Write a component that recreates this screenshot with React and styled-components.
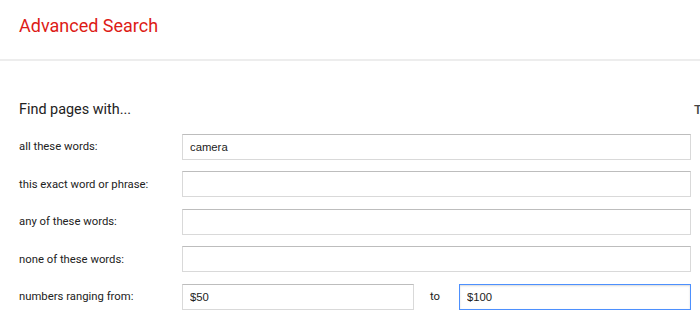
import React from "react";
import styled, { createGlobalStyle } from "styled-components";

const GlobalStyle = createGlobalStyle`
  html, body {
    margin: 0;
    padding: 0;
    background: #fff;
    overflow: hidden;
  }
  body {
    font-family: Roboto, "Liberation Sans", Arial, sans-serif;
    color: #222;
  }
  * { box-sizing: border-box; }
`;

const Page = styled.div`
  width: 700px;
  height: 329px;
  overflow: hidden;
`;

const Header = styled.header`
  height: 61px;
  padding: 15px 0 0 19px;
  border-bottom: 2px solid #ededed;
`;

const Title = styled.h1`
  margin: 0;
  font-size: 18px;
  font-weight: 400;
  line-height: normal;
  color: #dd1b16;
`;

const Main = styled.main`
  padding: 39.5px 0 0 19px;
`;

const Form = styled.div`
  display: grid;
  grid-template-columns: 163px 509px max-content;
  align-items: center;
`;

const SectionRow = styled.div`
  grid-column: 1 / -1;
  display: grid;
  grid-template-columns: 672px max-content;
  column-gap: 3px;
  align-items: baseline;
  margin-bottom: 10.5px;
`;

const SectionTitle = styled.h2`
  margin: 0;
  font-size: 14.4px;
  font-weight: 400;
  line-height: normal;
  color: #222;
`;

const Hint = styled.div`
  font-size: 12.8px;
  font-weight: 500;
  color: #444;
  white-space: nowrap;
`;

const Label = styled.label`
  height: 37.5px;
  display: flex;
  align-items: center;
  font-size: 11.3px;
  color: #222;
  white-space: nowrap;
`;

const Field = styled.div`
  height: 37.5px;
  display: flex;
  align-items: center;
`;

const Spacer = styled.div``;

const Input = styled.input`
  flex: 1;
  min-width: 0;
  height: 26px;
  margin: 0;
  padding: 0 7px;
  border: 1px solid ${(p) => (p.$focused ? "#4d90fe" : "#d9d9d9")};
  border-top-color: ${(p) => (p.$focused ? "#4d90fe" : "#bdbdbd")};
  border-radius: 0;
  background: #fff;
  font-family: "Liberation Sans", Arial, sans-serif;
  font-size: 11.3px;
  color: #222;
  outline: none;
  box-shadow: ${(p) => (p.$focused ? "inset 0 1px 2px rgba(0,0,0,0.15)" : "none")};
`;

const To = styled.span`
  font-size: 11.3px;
  color: #222;
  margin: 0 19px 0 16px;
`;

const rows = [
  { label: "all these words:", value: "camera" },
  { label: "this exact word or phrase:", value: "" },
  { label: "any of these words:", value: "" },
  { label: "none of these words:", value: "" },
];

export default function App() {
  return (
    <Page>
      <GlobalStyle />
      <Header>
        <Title>Advanced Search</Title>
      </Header>
      <Main>
        <Form>
          <SectionRow>
            <SectionTitle>Find pages with...</SectionTitle>
            <Hint>To do this in the search box.</Hint>
          </SectionRow>
          {rows.map((r) => (
            <React.Fragment key={r.label}>
              <Label>{r.label}</Label>
              <Field>
                <Input defaultValue={r.value} />
              </Field>
              <Spacer />
            </React.Fragment>
          ))}
          <Label>numbers ranging from:</Label>
          <Field>
            <Input defaultValue="$50" />
            <To>to</To>
            <Input defaultValue="$100" $focused />
          </Field>
          <Spacer />
        </Form>
      </Main>
    </Page>
  );
}
